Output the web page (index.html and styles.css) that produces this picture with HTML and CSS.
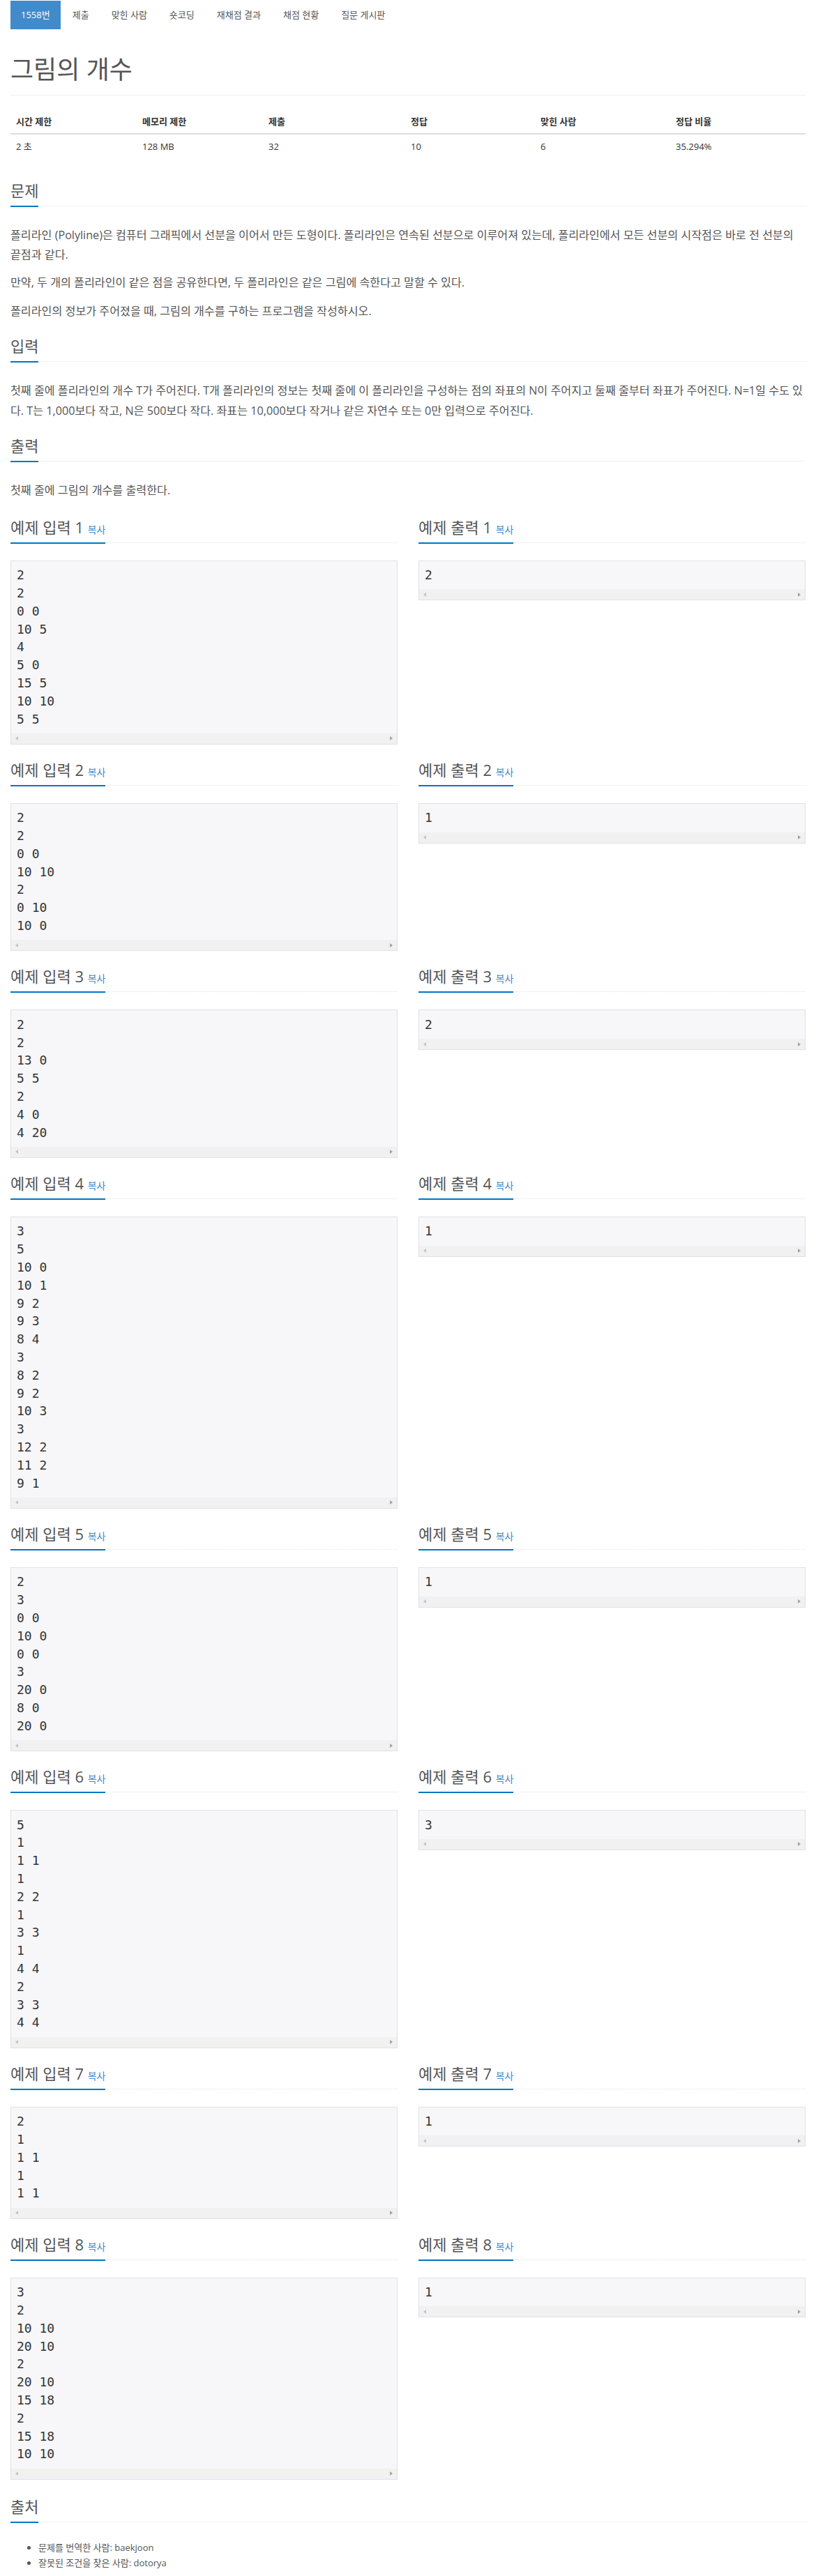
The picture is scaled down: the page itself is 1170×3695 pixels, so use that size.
FILE: index.html
```html
<!DOCTYPE html>
<html lang="ko">
<head>
<meta charset="utf-8">
<title>1558번: 그림의 개수</title>
<link rel="stylesheet" href="styles.css">
</head>
<body>
<div class="container">
  <ul class="nav">
    <li class="active"><a>1558번</a></li>
    <li><a>제출</a></li>
    <li><a>맞힌 사람</a></li>
    <li><a>숏코딩</a></li>
    <li><a>재채점 결과</a></li>
    <li><a>채점 현황</a></li>
    <li><a>질문 게시판</a></li>
  </ul>

  <div class="page-header"><h1>그림의 개수</h1></div>

  <table class="info">
    <thead>
      <tr><th class="c1">시간 제한</th><th class="c2">메모리 제한</th><th class="c3">제출</th><th class="c4">정답</th><th class="c5">맞힌 사람</th><th class="c6">정답 비율</th></tr>
    </thead>
    <tbody>
      <tr><td>2 초</td><td>128 MB</td><td>32</td><td>10</td><td>6</td><td>35.294%</td></tr>
    </tbody>
  </table>

  <section class="problem-section">
    <div class="headline"><h2>문제</h2></div>
    <div class="problem-text">
      <p>폴리라인 (Polyline)은 컴퓨터 그래픽에서 선분을 이어서 만든 도형이다. 폴리라인은 연속된 선분으로 이루어져 있는데, 폴리라인에서 모든 선분의 시작점은 바로 전 선분의 끝점과 같다.</p>
      <p>만약, 두 개의 폴리라인이 같은 점을 공유한다면, 두 폴리라인은 같은 그림에 속한다고 말할 수 있다.</p>
      <p>폴리라인의 정보가 주어졌을 때, 그림의 개수를 구하는 프로그램을 작성하시오.</p>
    </div>
  </section>

  <section class="problem-section">
    <div class="headline"><h2>입력</h2></div>
    <div class="problem-text">
      <p>첫째 줄에 폴리라인의 개수 T가 주어진다. T개 폴리라인의 정보는 첫째 줄에 이 폴리라인을 구성하는 점의 좌표의 N이 주어지고 둘째 줄부터 좌표가 주어진다. N=1일 수도 있다. T는 1,000보다 작고, N은 500보다 작다. 좌표는 10,000보다 작거나 같은 자연수 또는 0만 입력으로 주어진다.</p>
    </div>
  </section>

  <section class="problem-section">
    <div class="headline"><h2>출력</h2></div>
    <div class="problem-text">
      <p>첫째 줄에 그림의 개수를 출력한다.</p>
    </div>
  </section>

  <div class="samples">
    <section class="sample"><div class="headline"><h2>예제 입력 1 <a class="copy">복사</a></h2></div><div class="sampledata"><pre>2
2
0 0
10 5
4
5 0
15 5
10 10
5 5</pre><div class="hscroll"><span class="arr-l"></span><span class="arr-r"></span></div></div></section>
    <section class="sample"><div class="headline"><h2>예제 출력 1 <a class="copy">복사</a></h2></div><div class="sampledata"><pre>2</pre><div class="hscroll"><span class="arr-l"></span><span class="arr-r"></span></div></div></section>

    <section class="sample"><div class="headline"><h2>예제 입력 2 <a class="copy">복사</a></h2></div><div class="sampledata"><pre>2
2
0 0
10 10
2
0 10
10 0</pre><div class="hscroll"><span class="arr-l"></span><span class="arr-r"></span></div></div></section>
    <section class="sample"><div class="headline"><h2>예제 출력 2 <a class="copy">복사</a></h2></div><div class="sampledata"><pre>1</pre><div class="hscroll"><span class="arr-l"></span><span class="arr-r"></span></div></div></section>

    <section class="sample"><div class="headline"><h2>예제 입력 3 <a class="copy">복사</a></h2></div><div class="sampledata"><pre>2
2
13 0
5 5
2
4 0
4 20</pre><div class="hscroll"><span class="arr-l"></span><span class="arr-r"></span></div></div></section>
    <section class="sample"><div class="headline"><h2>예제 출력 3 <a class="copy">복사</a></h2></div><div class="sampledata"><pre>2</pre><div class="hscroll"><span class="arr-l"></span><span class="arr-r"></span></div></div></section>

    <section class="sample"><div class="headline"><h2>예제 입력 4 <a class="copy">복사</a></h2></div><div class="sampledata"><pre>3
5
10 0
10 1
9 2
9 3
8 4
3
8 2
9 2
10 3
3
12 2
11 2
9 1</pre><div class="hscroll"><span class="arr-l"></span><span class="arr-r"></span></div></div></section>
    <section class="sample"><div class="headline"><h2>예제 출력 4 <a class="copy">복사</a></h2></div><div class="sampledata"><pre>1</pre><div class="hscroll"><span class="arr-l"></span><span class="arr-r"></span></div></div></section>

    <section class="sample"><div class="headline"><h2>예제 입력 5 <a class="copy">복사</a></h2></div><div class="sampledata"><pre>2
3
0 0
10 0
0 0
3
20 0
8 0
20 0</pre><div class="hscroll"><span class="arr-l"></span><span class="arr-r"></span></div></div></section>
    <section class="sample"><div class="headline"><h2>예제 출력 5 <a class="copy">복사</a></h2></div><div class="sampledata"><pre>1</pre><div class="hscroll"><span class="arr-l"></span><span class="arr-r"></span></div></div></section>

    <section class="sample"><div class="headline"><h2>예제 입력 6 <a class="copy">복사</a></h2></div><div class="sampledata"><pre>5
1
1 1
1
2 2
1
3 3
1
4 4
2
3 3
4 4</pre><div class="hscroll"><span class="arr-l"></span><span class="arr-r"></span></div></div></section>
    <section class="sample"><div class="headline"><h2>예제 출력 6 <a class="copy">복사</a></h2></div><div class="sampledata"><pre>3</pre><div class="hscroll"><span class="arr-l"></span><span class="arr-r"></span></div></div></section>

    <section class="sample"><div class="headline"><h2>예제 입력 7 <a class="copy">복사</a></h2></div><div class="sampledata"><pre>2
1
1 1
1
1 1</pre><div class="hscroll"><span class="arr-l"></span><span class="arr-r"></span></div></div></section>
    <section class="sample"><div class="headline"><h2>예제 출력 7 <a class="copy">복사</a></h2></div><div class="sampledata"><pre>1</pre><div class="hscroll"><span class="arr-l"></span><span class="arr-r"></span></div></div></section>

    <section class="sample"><div class="headline"><h2>예제 입력 8 <a class="copy">복사</a></h2></div><div class="sampledata"><pre>3
2
10 10
20 10
2
20 10
15 18
2
15 18
10 10</pre><div class="hscroll"><span class="arr-l"></span><span class="arr-r"></span></div></div></section>
    <section class="sample"><div class="headline"><h2>예제 출력 8 <a class="copy">복사</a></h2></div><div class="sampledata"><pre>1</pre><div class="hscroll"><span class="arr-l"></span><span class="arr-r"></span></div></div></section>
  </div>

  <section class="problem-section source">
    <div class="headline"><h2>출처</h2></div>
    <ul class="source-list">
      <li>문제를 번역한 사람: baekjoon</li>
      <li>잘못된 조건을 찾은 사람: dotorya</li>
    </ul>
  </section>
</div>
</body>
</html>
```

FILE: styles.css
```css
html, body {
  margin: 0;
  padding: 0;
  background: #fff;
}
body {
  font-family: "Open Sans", "Noto Sans CJK KR", sans-serif;
  font-size: 13px;
  line-height: 1.42857;
  color: #333;
}
.container {
  width: 1140px;
  padding: 0 15px;
}

/* nav pills */
.nav {
  list-style: none;
  margin: 0;
  padding: 1px 0 0 0;
  display: flex;
  gap: 2px;
}
.nav a {
  display: block;
  padding: 10px 15px;
  line-height: 21px;
  color: #555;
  text-decoration: none;
}
.nav .active a {
  background: #428bca;
  color: #fff;
}

/* title */
.page-header {
  margin: 38px 0 20px;
  padding-bottom: 9px;
  border-bottom: 1px solid #eee;
}
.page-header h1 {
  margin: 0 0 7px;
  font-size: 36px;
  font-weight: 400;
  line-height: 1.1;
  color: #555;
}

/* info table */
.info {
  width: 100%;
  border-collapse: collapse;
  margin-bottom: 21px;
}
.info th, .info td {
  padding: 8px;
  text-align: left;
  line-height: 1.42857;
}
.info th {
  font-weight: 700;
  border-bottom: 2px solid #ddd;
}
.info td {
  border-top: 1px solid #ddd;
}
.info .c1 { width: 165px; }
.info .c2 { width: 165px; }
.info .c3 { width: 188px; }
.info .c4 { width: 170px; }
.info .c5 { width: 178px; }

/* section headline */
.headline {
  margin: 10px 0 25px;
  border-bottom: 1px dotted #dfe3ea;
}
.headline h2 {
  display: inline-block;
  margin: 0 0 -2px;
  padding-bottom: 5px;
  font-size: 22px;
  font-weight: 400;
  line-height: 33px;
  color: #555;
  border-bottom: 2px solid #0076c0;
}
.copy {
  font-size: 14px;
  line-height: 14px;
  color: #428bca;
  text-decoration: none;
}

.problem-section {
  display: flow-root;
}
.problem-section .headline {
  margin-top: 8px;
}
.source .headline {
  margin-top: 12px;
}
.problem-text {
  padding-top: 2px;
  font-size: 16.17px;
  line-height: 28.2px;
  color: #555;
}
.problem-text p {
  margin: 0 0 12.3px;
}

/* samples */
.samples {
  display: grid;
  grid-template-columns: 1fr 1fr;
  column-gap: 30px;
  align-items: start;
}
.sample {
  display: flow-root;
}
.sampledata {
  margin: 0 0 10px;
  background: #f7f7f9;
  border: 1px solid #e1e1e8;
}
.sampledata pre {
  margin: 0;
  padding: 7.5px 8px;
  font-family: "DejaVu Sans Mono", monospace;
  font-size: 18px;
  line-height: 25.8px;
  color: #333;
  white-space: pre;
}
.hscroll {
  height: 15px;
  background: #f1f1f1;
  display: flex;
  justify-content: space-between;
  align-items: center;
  padding: 0 6px;
}
.arr-l, .arr-r {
  width: 0;
  height: 0;
  border-top: 3.5px solid transparent;
  border-bottom: 3.5px solid transparent;
}
.arr-l {
  border-right: 4px solid #c4c4c4;
}
.arr-r {
  border-left: 4px solid #a3a3a3;
}

/* source */
.source-list {
  margin: 0 0 10px;
  padding-left: 40px;
  line-height: 22px;
  color: #555;
}
```
